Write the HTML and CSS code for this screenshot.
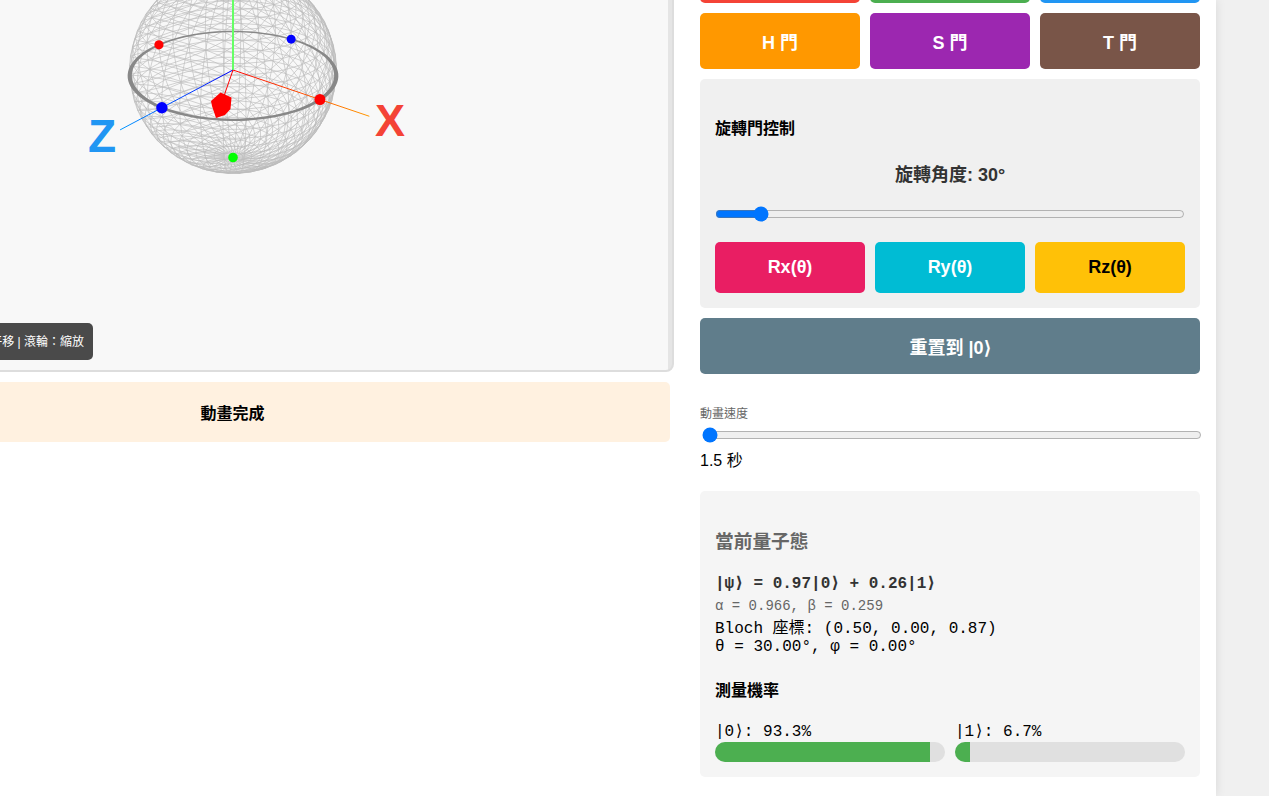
FILE: index.html
```
<!DOCTYPE html>
<html lang="zh-Hant">
<head>
<meta charset="utf-8">
<title>Bloch 球</title>
<link rel="stylesheet" href="styles.css">
</head>
<body>
<main class="container">
  <section class="stage">
    <div class="viewer">
      <svg class="scene" viewBox="-436 -300 872 600" preserveAspectRatio="xMidYMid meet" role="img" aria-label="Bloch 球">
        <defs>
          <linearGradient id="gx" gradientUnits="userSpaceOnUse" x1="0" y1="0" x2="137" y2="46"><stop offset="0" stop-color="#f00"/><stop offset="1" stop-color="#f90"/></linearGradient>
          <linearGradient id="gz" gradientUnits="userSpaceOnUse" x1="0" y1="0" x2="-113" y2="60"><stop offset="0" stop-color="#00f"/><stop offset="1" stop-color="#09f"/></linearGradient>
        </defs>
        <path id="wire-back" class="wire"/>
        <path id="wire-front" class="wire"/>
        <path id="ring" class="ring"/>
        <path id="axis-x" class="axis" stroke="url(#gx)"/>
        <path id="axis-y" class="axis axis-y"/>
        <path id="axis-z" class="axis" stroke="url(#gz)"/>
        <path class="arrow-line" d="M0 0L-9 26"/>
        <polygon class="arrow-head" points="-22,31 -12.5,22.5 -1.5,27.5 -2.5,39 -8,45 -17,48 -21,36"/>
        <g id="poles"></g>
        <text class="tag tag-x" x="157" y="66">X</text>
        <text class="tag tag-z" x="-131" y="82">Z</text>
      </svg>
      <div class="hint">左鍵拖曳：旋轉 | 右鍵拖曳：平移 | 滾輪：縮放</div>
    </div>
    <div class="status">動畫完成</div>
  </section>

  <section class="panel">
    <div class="gates">
      <button class="btn red" aria-label="X 門"></button>
      <button class="btn green" aria-label="Y 門"></button>
      <button class="btn blue" aria-label="Z 門"></button>
      <button class="btn orange">H 門</button>
      <button class="btn purple">S 門</button>
      <button class="btn brown">T 門</button>
    </div>
    <div class="rotation">
      <h4>旋轉門控制</h4>
      <label class="angle" for="angle">旋轉角度: 30°</label>
      <input class="slider" type="range" id="angle" min="0" max="360" value="30">
      <div class="gates">
        <button class="btn pink">Rx(θ)</button>
        <button class="btn cyan">Ry(θ)</button>
        <button class="btn amber">Rz(θ)</button>
      </div>
    </div>
    <button class="btn slate">重置到 |0⟩</button>
    <div class="speed">
      <label class="caption" for="speed">動畫速度</label>
      <input class="speed-slider" type="range" id="speed" min="0" max="100" value="0">
      <div class="seconds">1.5 秒</div>
    </div>
    <div class="state">
      <h3>當前量子態</h3>
      <div class="psi">|ψ⟩ = 0.97|0⟩ + 0.26|1⟩</div>
      <div class="amps">α = 0.966, β = 0.259</div>
      <div class="line">Bloch 座標: (0.50, 0.00, 0.87)</div>
      <div class="line">θ = 30.00°, φ = 0.00°</div>
      <h4>測量機率</h4>
      <div class="probs">
        <div>|0⟩: 93.3%<div class="bar"><div class="fill" style="width:93.3%"></div></div></div>
        <div>|1⟩: 6.7%<div class="bar"><div class="fill" style="width:6.7%"></div></div></div>
      </div>
    </div>
  </section>
</main>
<script src="scene.js"></script>
</body>
</html>
```
FILE: styles.css
```
* { box-sizing: border-box; }
body {
  margin: 0;
  background: #f0f0f0;
  font-family: "Liberation Sans", "Noto Sans CJK TC", sans-serif;
  font-size: 16px;
  color: #000;
  overflow-x: hidden;
}
.container {
  display: grid;
  grid-template-columns: minmax(0, 1fr) 500px;
  gap: 30px;
  align-items: start;
  min-height: 100vh;
  margin-right: 53px;
  padding-right: 16px;
  padding-bottom: 16px;
  background: #fff;
  box-shadow: 0 0 10px rgba(0, 0, 0, 0.1);
}
.stage { margin: -232px 0 0 -205px; }
.viewer {
  position: relative;
  height: 604px;
  margin-right: -4px;
  padding-right: 3px;
  border: 2px solid #ddd;
  border-radius: 8px;
  background: linear-gradient(#e5e5e5, #e5e5e5) right / 4px 100% no-repeat #f8f8f8;
  overflow: hidden;
}
.scene { display: block; width: 100%; height: 100%; }
.wire { fill: none; stroke: #bbb; stroke-opacity: 0.65; stroke-width: 1; }
.ring { fill: #888; fill-rule: evenodd; }
.axis { fill: none; stroke-width: 1; }
.axis-y { stroke: #6f6; stroke-width: 2; }
.arrow-line { stroke: #f00; stroke-width: 1; }
.arrow-head { fill: #f00; }
.tag { font-weight: bold; text-anchor: middle; }
.tag-x { font-size: 45px; fill: #f44336; }
.tag-z { font-size: 46px; fill: #2196f3; }
.hint {
  position: absolute;
  left: 10px;
  bottom: 10px;
  width: 286px;
  padding: 11px 9px 9px;
  border-radius: 5px;
  background: rgba(0, 0, 0, 0.7);
  color: #fff;
  font-size: 12px;
  line-height: 17px;
  text-align: right;
  white-space: nowrap;
}
.status {
  margin-top: 10px;
  padding: 20px 18px 16px;
  border-radius: 5px;
  background: #fff1e0;
  font-weight: bold;
  line-height: 24px;
  text-align: center;
}
.panel { display: flex; flex-direction: column; margin-top: -53px; }
.gates { display: grid; grid-template-columns: repeat(3, 1fr); grid-auto-rows: 1fr; gap: 10px; }
.btn {
  padding: 15px;
  border: 0;
  border-radius: 5px;
  color: #fff;
  font-family: inherit;
  font-size: 18px;
  font-weight: bold;
}
.red { background: #f44336; }
.green { background: #4caf50; }
.blue { background: #2196f3; }
.orange { background: #ff9800; }
.purple { background: #9c27b0; }
.brown { background: #795548; }
.pink { background: #e91e63; }
.cyan { background: #00bcd4; }
.amber { background: #ffc107; color: #000; }
.slate { background: #607d8b; }
.rotation {
  margin: 10px 0;
  padding: 38px 15px 15px;
  border-radius: 5px;
  background: #f0f0f0;
}
h3, h4 { margin: 0; }
h4 { line-height: 24px; }
.angle {
  display: block;
  margin-top: 21px;
  color: #333;
  font-size: 18px;
  font-weight: bold;
  line-height: 27px;
  text-align: center;
}
.slider { display: block; width: 100%; height: 16px; margin: 17px 0 20px; }
.speed { margin-top: 31px; }
.caption { display: block; color: #666; font-size: 12px; line-height: 18px; }
.speed-slider { display: block; width: 100%; height: 16px; margin: 4px 2px; }
.seconds { line-height: 24px; margin-top: 6px; }
.state {
  margin-top: 18px;
  padding: 38px 15px 15px;
  border-radius: 5px;
  background: #f5f5f5;
  font-family: "Liberation Mono", "Noto Sans CJK TC", monospace;
}
.state h3 { color: #666; line-height: 28px; }
.psi { margin-top: 17px; color: #333; font-weight: bold; line-height: 20px; }
.amps { margin: 2px 0 4px; color: #666; font-size: 14px; line-height: 20px; }
.line { line-height: 18px; }
.state h4 { margin: 24px 0 19px; }
.probs { display: grid; grid-template-columns: 1fr 1fr; gap: 10px; line-height: 19px; }
.bar { height: 20px; border-radius: 10px; background: #e0e0e0; overflow: hidden; }
.fill { height: 100%; background: #4caf50; }
```
FILE: scene.js
```
const F = 724.3;
const camera = [4, 3, 5];
const D = Math.hypot(...camera);
const n = camera.map(v => v / D);
const h = Math.hypot(n[0], n[2]);
const right = [n[2] / h, 0, -n[0] / h];
const up = [-n[1] * n[0] / h, h, -n[1] * n[2] / h];
const dot = (a, b) => a[0] * b[0] + a[1] * b[1] + a[2] * b[2];
const project = p => {
  const k = F / (D - dot(p, n));
  return [dot(p, right) * k, -dot(p, up) * k];
};
const at = p => project(p).map(v => v.toFixed(2)).join(" ");
const set = (id, d) => document.getElementById(id).setAttribute("d", d);

// Triangulated sphere wireframe, split at the silhouette.
const SEG = 32;
const vertex = (i, j) => {
  const phi = i / SEG * 2 * Math.PI, theta = j / SEG * Math.PI;
  return [-Math.cos(phi) * Math.sin(theta), Math.cos(theta), Math.sin(phi) * Math.sin(theta)];
};
let back = "", front = "";
const edge = (a, b) => {
  const seg = "M" + at(a) + "L" + at(b);
  if (dot(a, n) + dot(b, n) > 2 / D) front += seg; else back += seg;
};
for (let j = 0; j < SEG; j++) {
  for (let i = 0; i < SEG; i++) {
    edge(vertex(i, j), vertex(i, j + 1));
    if (j > 0) edge(vertex(i, j), vertex(i + 1, j));
    if (j > 0 && j < SEG - 1) edge(vertex(i + 1, j), vertex(i, j + 1));
  }
}
set("wire-back", back);
set("wire-front", front);

// Equator band.
const circle = r => {
  let d = "";
  for (let i = 0; i < 96; i++) {
    const a = i / 96 * 2 * Math.PI;
    d += (i ? "L" : "M") + at([r * Math.cos(a), 0, r * Math.sin(a)]);
  }
  return d + "Z";
};
set("ring", circle(1.02) + circle(0.98));

set("axis-x", "M0 0L" + at([1.5, 0, 0]));
set("axis-y", "M0 0L" + at([0, 1.5, 0]));
set("axis-z", "M0 0L" + at([0, 0, 1.5]));

const poles = document.getElementById("poles");
[[1, 0, 0, "#f00", 5.5], [-1, 0, 0, "#f00", 4.6], [0, 1, 0, "#0f0", 5], [0, -1, 0, "#0f0", 4.8],
 [0, 0, 1, "#00f", 5.7], [0, 0, -1, "#00f", 4.5]].forEach(([x, y, z, color, r]) => {
  const c = document.createElementNS("http://www.w3.org/2000/svg", "circle");
  const [cx, cy] = project([x, y, z]);
  c.setAttribute("cx", cx);
  c.setAttribute("cy", cy);
  c.setAttribute("r", r);
  c.setAttribute("fill", color);
  poles.appendChild(c);
});
```
